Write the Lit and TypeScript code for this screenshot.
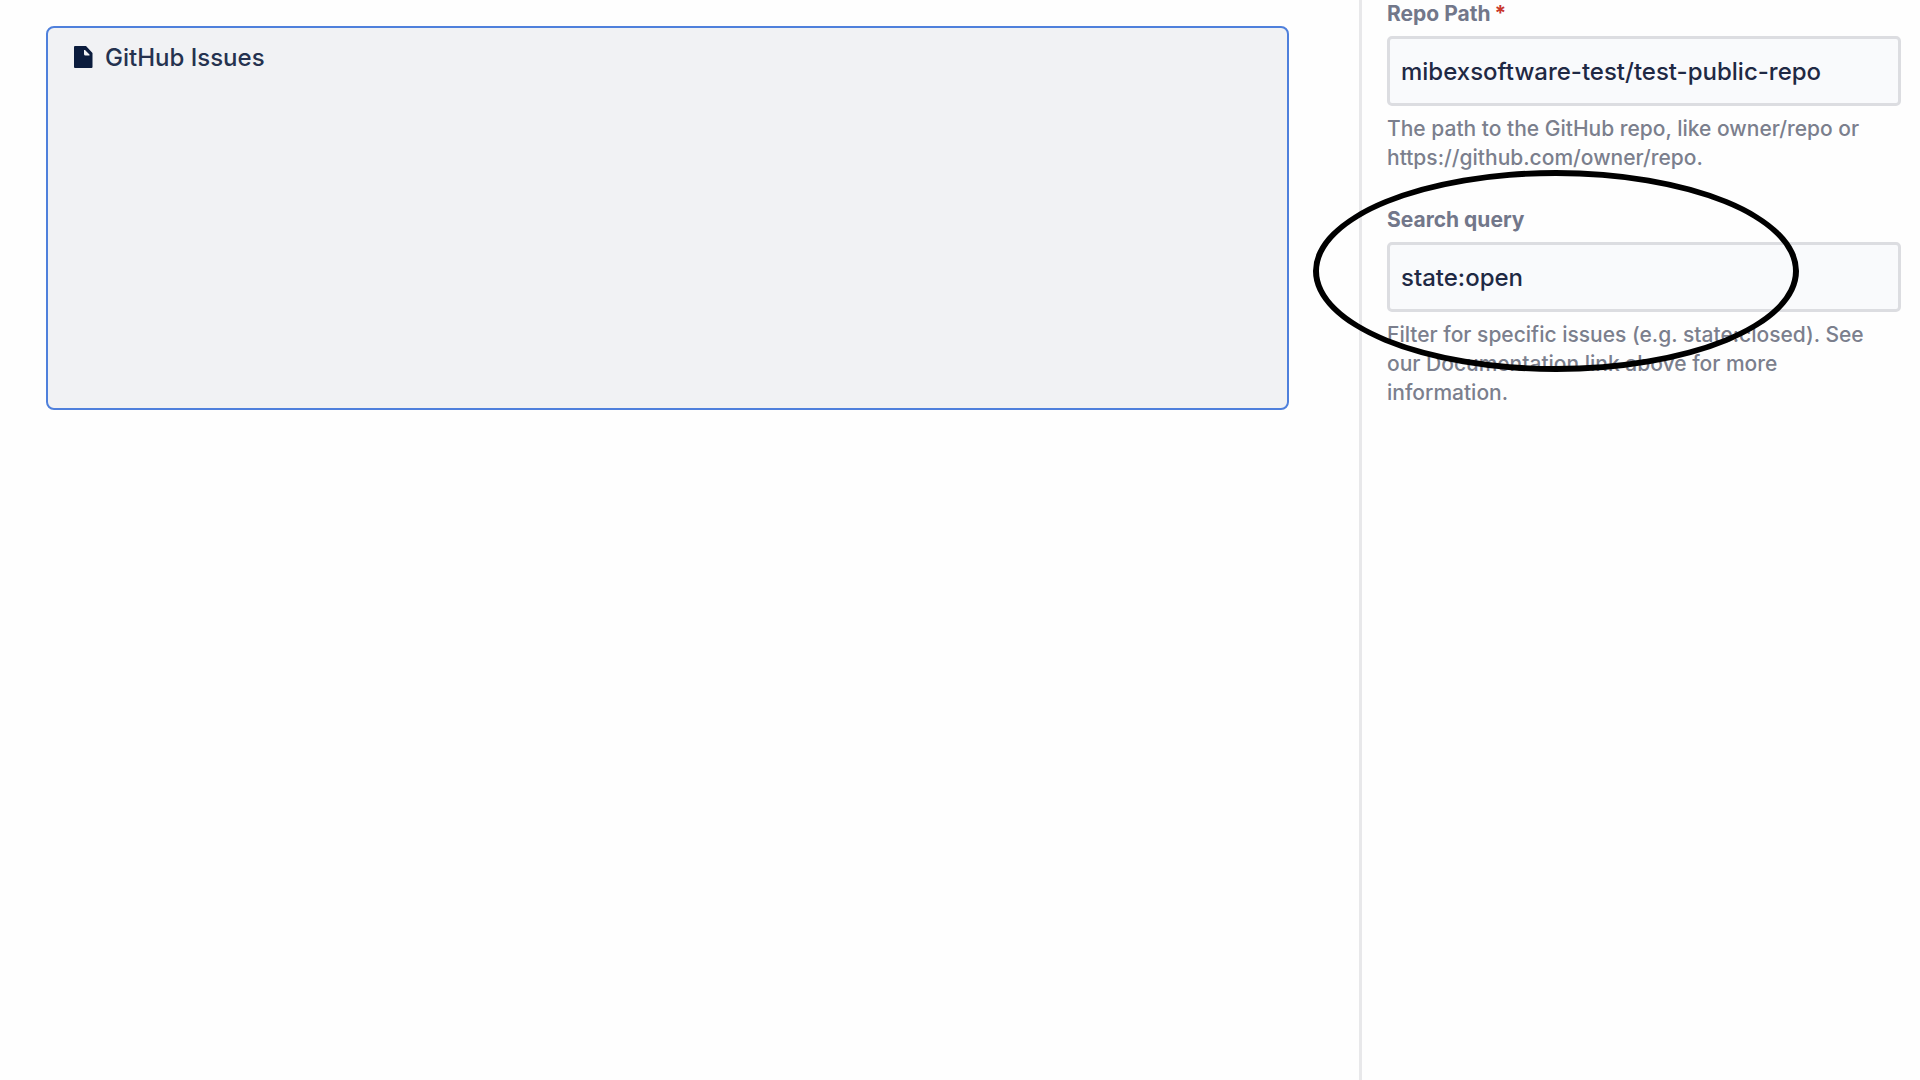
import { LitElement, html, css, nothing } from "lit";
import { customElement, property } from "lit/decorators.js";

@customElement("macro-card")
class MacroCard extends LitElement {
  static styles = css`
    :host {
      display: block;
    }
    .card {
      box-sizing: border-box;
      min-height: 384px;
      padding: 16px 24px;
      border: 2px solid #4f80dc;
      border-radius: 8px;
      background: #f1f2f4;
    }
    .title {
      display: flex;
      align-items: center;
      gap: 12px;
      margin: 0;
      font-size: 24px;
      line-height: 28px;
      font-weight: 500;
      color: #25324f;
    }
    .icon {
      width: 21px;
      height: 24px;
      fill: #0b1c3d;
    }
  `;

  @property() name = "";

  render() {
    return html`
      <section class="card">
        <h1 class="title">
          <svg class="icon" viewBox="0 0 21 24" aria-hidden="true">
            <path
              fill-rule="evenodd"
              d="M3 0H14L20.500 7V21Q20.500 22 19.500 22H3Q2 22 2 21V1Q2 0 3 0ZM12 4V8Q12 9.500 13.500 9.500H17.500V8.500L13 4Z"
            />
          </svg>
          ${this.name}
        </h1>
      </section>
    `;
  }
}

@customElement("text-field")
class TextField extends LitElement {
  static styles = css`
    :host {
      display: flex;
      flex-direction: column;
      gap: 8px;
    }
    .label {
      font-size: 21px;
      line-height: 28px;
      font-weight: 700;
      color: #72778a;
    }
    .required {
      margin-left: 4px;
      color: #c9372c;
    }
    .input {
      box-sizing: border-box;
      width: 100%;
      height: 70px;
      margin: 0;
      padding: 0 11px;
      border: 3px solid #dcdde1;
      border-radius: 5px;
      outline: none;
      background: #f9fafc;
      font: inherit;
      font-size: 24px;
      font-weight: 500;
      color: #1f2944;
    }
    .help {
      margin: 0;
      padding-right: 24px;
      font-size: 21px;
      line-height: 29px;
      font-weight: 500;
      color: #7b7f8d;
    }
  `;

  @property() label = "";
  @property() value = "";
  @property() help = "";
  @property({ type: Boolean }) required = false;

  render() {
    return html`
      <label class="label" for="input"
        >${this.label}${this.required
          ? html`<span class="required">*</span>`
          : nothing}</label
      >
      <input
        class="input"
        id="input"
        type="text"
        spellcheck="false"
        aria-describedby="help"
        ?required=${this.required}
        .value=${this.value}
      />
      <p class="help" id="help">${this.help}</p>
    `;
  }
}

@customElement("app-root")
class AppRoot extends LitElement {
  static styles = css`
    :host {
      display: flex;
      min-height: 100vh;
      background: #fefefe;
      font-family: Inter, "Liberation Sans", sans-serif;
    }
    .canvas {
      flex: 1;
      min-width: 0;
      padding: 26px 70px 26px 46px;
    }
    .panel {
      box-sizing: border-box;
      display: flex;
      flex-direction: column;
      gap: 34px;
      width: 561px;
      padding: 0 19px 24px 25px;
      border-left: 3px solid #e8e8ea;
    }
    .marked {
      position: relative;
    }
    .ring {
      position: absolute;
      top: -36px;
      left: -74px;
      width: 486px;
      height: 202px;
      box-sizing: border-box;
      border: 6px solid #000;
      border-radius: 50%;
      pointer-events: none;
    }
  `;

  render() {
    return html`
      <main class="canvas">
        <macro-card name="GitHub Issues"></macro-card>
      </main>
      <aside class="panel">
        <text-field
          label="Repo Path"
          value="mibexsoftware-test/test-public-repo"
          help="The path to the GitHub repo, like owner/repo or https://github.com/owner/repo."
          required
        ></text-field>
        <div class="marked">
          <text-field
            label="Search query"
            value="state:open"
            help="Filter for specific issues (e.g. state:closed). See our Documentation link above for more information."
          ></text-field>
          <div class="ring"></div>
        </div>
      </aside>
    `;
  }
}
